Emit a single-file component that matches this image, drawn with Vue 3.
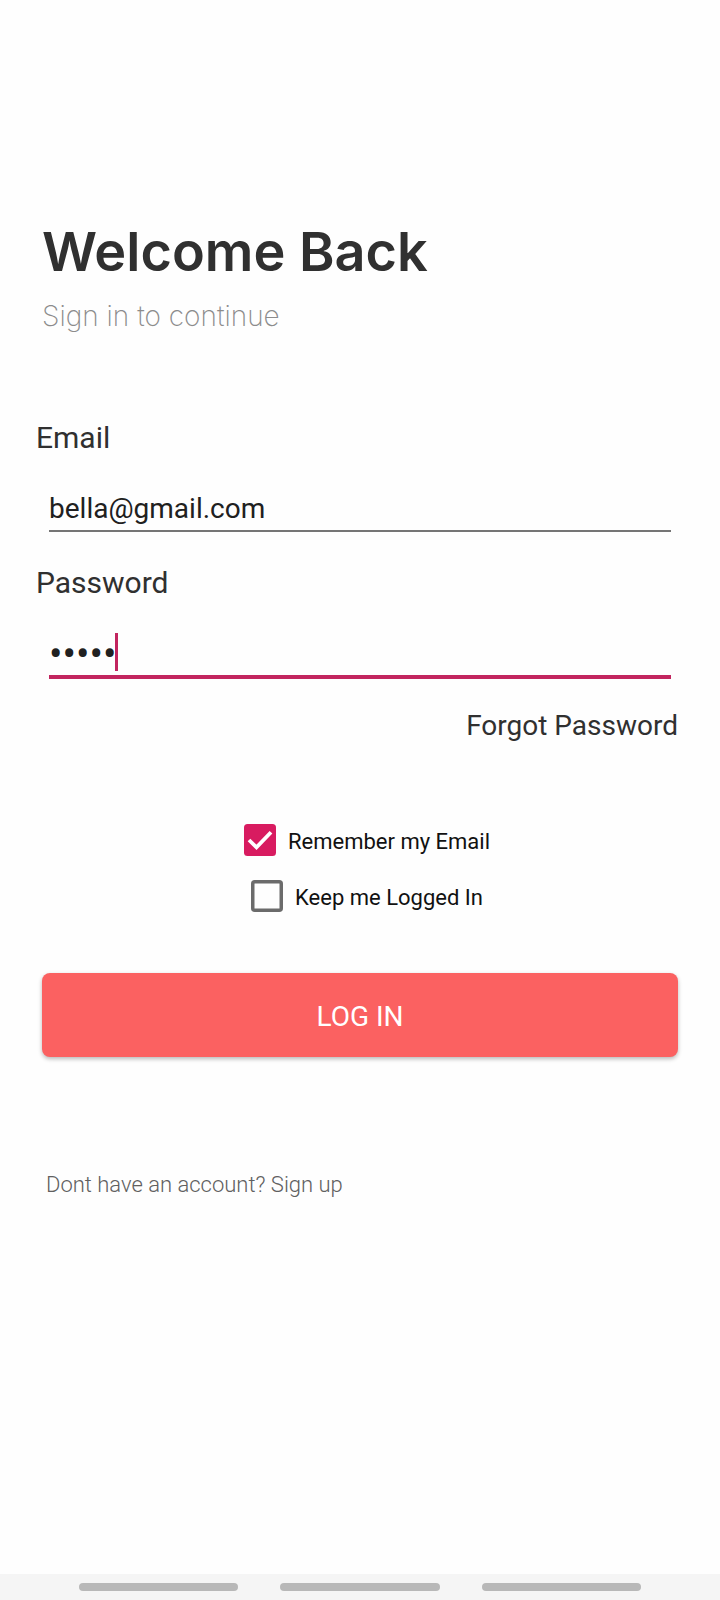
<script setup>
import { ref } from 'vue'

const email = ref('bella@gmail.com')
const password = ref('bella')
const rememberEmail = ref(true)
const keepLoggedIn = ref(false)
</script>

<template>
  <div class="screen">
    <main class="content">
      <h1 class="title">Welcome Back</h1>
      <p class="subtitle">Sign in to continue</p>

      <form class="form" @submit.prevent>
        <label class="label" for="email">Email</label>
        <input id="email" v-model="email" class="field" type="email" />

        <label class="label" for="password">Password</label>
        <div class="password">
          <input id="password" v-model="password" class="field active" type="password" />
          <span class="caret"></span>
        </div>

        <a class="forgot" href="#">Forgot Password</a>

        <div class="options">
          <label class="option">
            <input v-model="rememberEmail" class="native" type="checkbox" />
            <svg class="box" viewBox="0 0 32 32" aria-hidden="true">
              <template v-if="rememberEmail">
                <rect width="32" height="32" rx="3.5" fill="#d81b60" />
                <path d="M5 16 L12.5 23.3 L27 8.2" fill="none" stroke="#fff" stroke-width="3.8" />
              </template>
              <rect v-else x="1.75" y="1.75" width="28.5" height="28.5" rx="2" fill="none" stroke="#6b6b6b" stroke-width="3.5" />
            </svg>
            <span class="option-text">Remember my Email</span>
          </label>
          <label class="option">
            <input v-model="keepLoggedIn" class="native" type="checkbox" />
            <svg class="box" viewBox="0 0 32 32" aria-hidden="true">
              <template v-if="keepLoggedIn">
                <rect width="32" height="32" rx="3.5" fill="#d81b60" />
                <path d="M5 16 L12.5 23.3 L27 8.2" fill="none" stroke="#fff" stroke-width="3.8" />
              </template>
              <rect v-else x="1.75" y="1.75" width="28.5" height="28.5" rx="2" fill="none" stroke="#6b6b6b" stroke-width="3.5" />
            </svg>
            <span class="option-text">Keep me Logged In</span>
          </label>
        </div>

        <button class="login" type="submit">LOG IN</button>
      </form>

      <a class="signup" href="#">Dont have an account? Sign up</a>
    </main>

    <nav class="gestures" aria-label="System navigation">
      <span class="pill"></span>
      <span class="pill"></span>
      <span class="pill"></span>
    </nav>
  </div>
</template>

<style>
body {
  margin: 0;
  background: #fefefe;
}
</style>

<style scoped>
.screen {
  display: flex;
  flex-direction: column;
  min-height: 100vh;
  font-family: Roboto, "Noto Sans", sans-serif;
  color: #303030;
}

.content {
  flex: 1;
  display: flex;
  flex-direction: column;
  align-items: flex-start;
  padding: 220px 42px 0;
}

.title {
  margin: 0;
  font-family: Inter, sans-serif;
  font-size: 54px;
  line-height: 64px;
  font-weight: 600;
}

.subtitle {
  margin: 16px 0 0;
  font-family: Inter, sans-serif;
  font-size: 28px;
  line-height: 32px;
  font-weight: 200;
  color: #8c8c8c;
}

.form {
  display: flex;
  flex-direction: column;
  align-self: stretch;
  margin-top: 86px;
}

.label {
  align-self: flex-start;
  margin-left: -6px;
  font-size: 30px;
  line-height: 40px;
}

.field {
  box-sizing: border-box;
  width: 100%;
  height: 48px;
  padding: 2px 0 0;
  border: 0;
  border-bottom: 2px solid #757575;
  border-radius: 0;
  outline: none;
  background: transparent;
  font-family: inherit;
  font-size: 28px;
  line-height: 40px;
  color: #202020;
}

#email {
  align-self: stretch;
  width: auto;
  margin: 26px 7px 31px;
}

.password {
  position: relative;
  display: flex;
  margin: 26px 7px 0;
}

.field.active {
  height: 50px;
  padding: 4px 0 0;
  border-bottom: 4px solid #c2255f;
  caret-color: #c2255f;
  font-size: 40px;
}

.caret {
  position: absolute;
  left: 66px;
  top: 4px;
  width: 3px;
  height: 38px;
  background: #c2255f;
}

.forgot {
  align-self: flex-end;
  margin-top: 29px;
  font-size: 28px;
  line-height: 36px;
  color: #303030;
  text-decoration: none;
}

.options {
  display: flex;
  flex-direction: column;
  align-items: center;
  gap: 24px;
  margin: 80px 0 0 14px;
}

.option {
  position: relative;
  display: flex;
  align-items: center;
  gap: 12px;
  font-size: 22px;
  color: #111;
}

.option-text {
  padding-top: 4px;
  line-height: 28px;
}

.native {
  position: absolute;
  width: 32px;
  height: 32px;
  margin: 0;
  opacity: 0;
}

.box {
  width: 32px;
  height: 32px;
}

.login {
  height: 84px;
  margin-top: 61px;
  padding: 4px 0 0;
  border: 0;
  border-radius: 8px;
  background: #fb6161;
  box-shadow: 0 2px 4px rgba(0, 0, 0, 0.28);
  font-family: inherit;
  font-size: 28px;
  line-height: 40px;
  color: #fff;
}

.signup {
  margin: 112px 0 0 4px;
  font-size: 22px;
  font-weight: 300;
  line-height: 32px;
  color: #606060;
  text-decoration: none;
}

.gestures {
  box-sizing: border-box;
  display: flex;
  gap: 42px;
  height: 26px;
  padding: 9px 79px;
  background: #f5f5f5;
}

.pill {
  flex: 1;
  height: 8px;
  border-radius: 4px;
  background: #b8b8b8;
}
</style>
